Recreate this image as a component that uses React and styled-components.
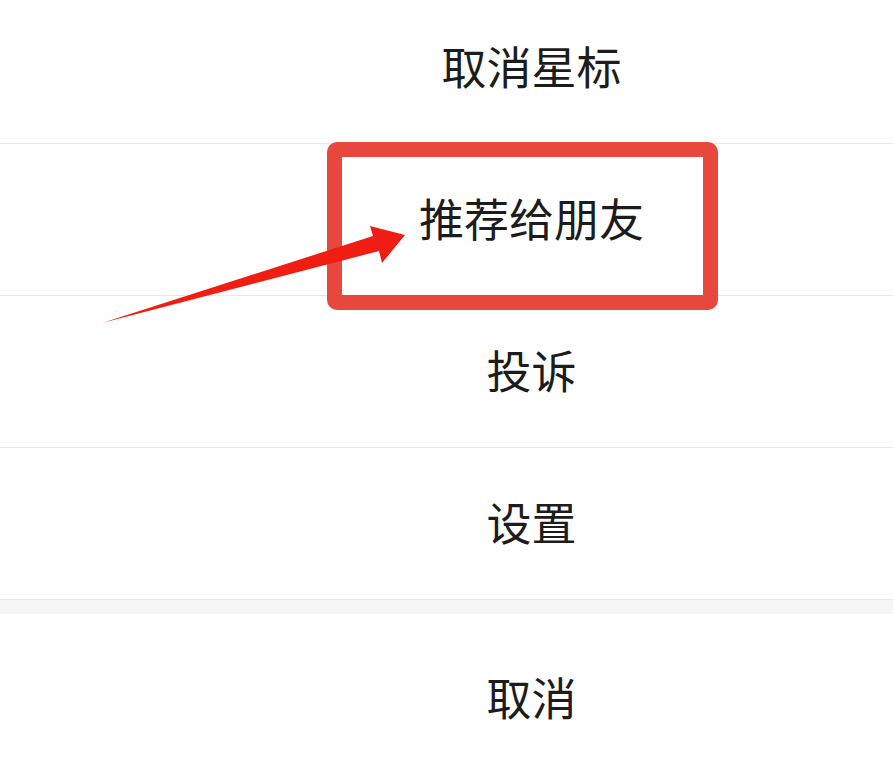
import React from "react";
import styled, { createGlobalStyle } from "styled-components";

const GlobalStyle = createGlobalStyle`
  html, body {
    margin: 0;
    padding: 0;
    background: #fff;
    overflow: hidden;
  }
  body {
    font-family: "Noto Sans CJK SC", "Noto Sans", sans-serif;
  }
`;

const Page = styled.div`
  position: relative;
  width: 893px;
  height: 766px;
  overflow: hidden;
  background: #fff;
`;

const Sheet = styled.div`
  display: flex;
  flex-direction: column;
  margin-top: -8px;
`;

const Row = styled.div`
  position: relative;
  box-sizing: border-box;
  height: 152px;
  display: flex;
  align-items: center;
  justify-content: center;
  padding-left: 170px;
  padding-bottom: ${(p) => (p.last ? "0" : "4px")};
  padding-top: ${(p) => (p.last ? "12px" : "0")};
  font-size: 45px;
  line-height: 1;
  color: #1c1c1c;
  background: #fff;
  border-bottom: ${(p) => (p.last ? "none" : "1px solid #e8e8e8")};
`;

const Gap = styled.div`
  height: 14px;
  background: #f5f5f5;
`;

const Highlight = styled.div`
  position: absolute;
  z-index: 2;
  top: -2px;
  left: 327px;
  width: 391px;
  height: 168px;
  box-sizing: border-box;
  border: 15px solid #e8473d;
  border-radius: 10px;
  pointer-events: none;
`;

const Arrow = styled.svg`
  position: absolute;
  z-index: 3;
  left: 0;
  top: 0;
  pointer-events: none;
`;

const items = ["取消星标", "推荐给朋友", "投诉", "设置"];

export default function App() {
  return (
    <Page>
      <GlobalStyle />
      <Sheet>
        {items.map((label, i) => (
          <Row key={label}>
            {label}
            {i === 1 && <Highlight />}
          </Row>
        ))}
        <Gap />
        <Row last>取消</Row>
      </Sheet>
      <Arrow width="893" height="766" viewBox="0 0 893 766">
        <polygon
          points="102,323 373,236 370,226 405,235 382,263 379,251"
          fill="#f01e12"
        />
      </Arrow>
    </Page>
  );
}
